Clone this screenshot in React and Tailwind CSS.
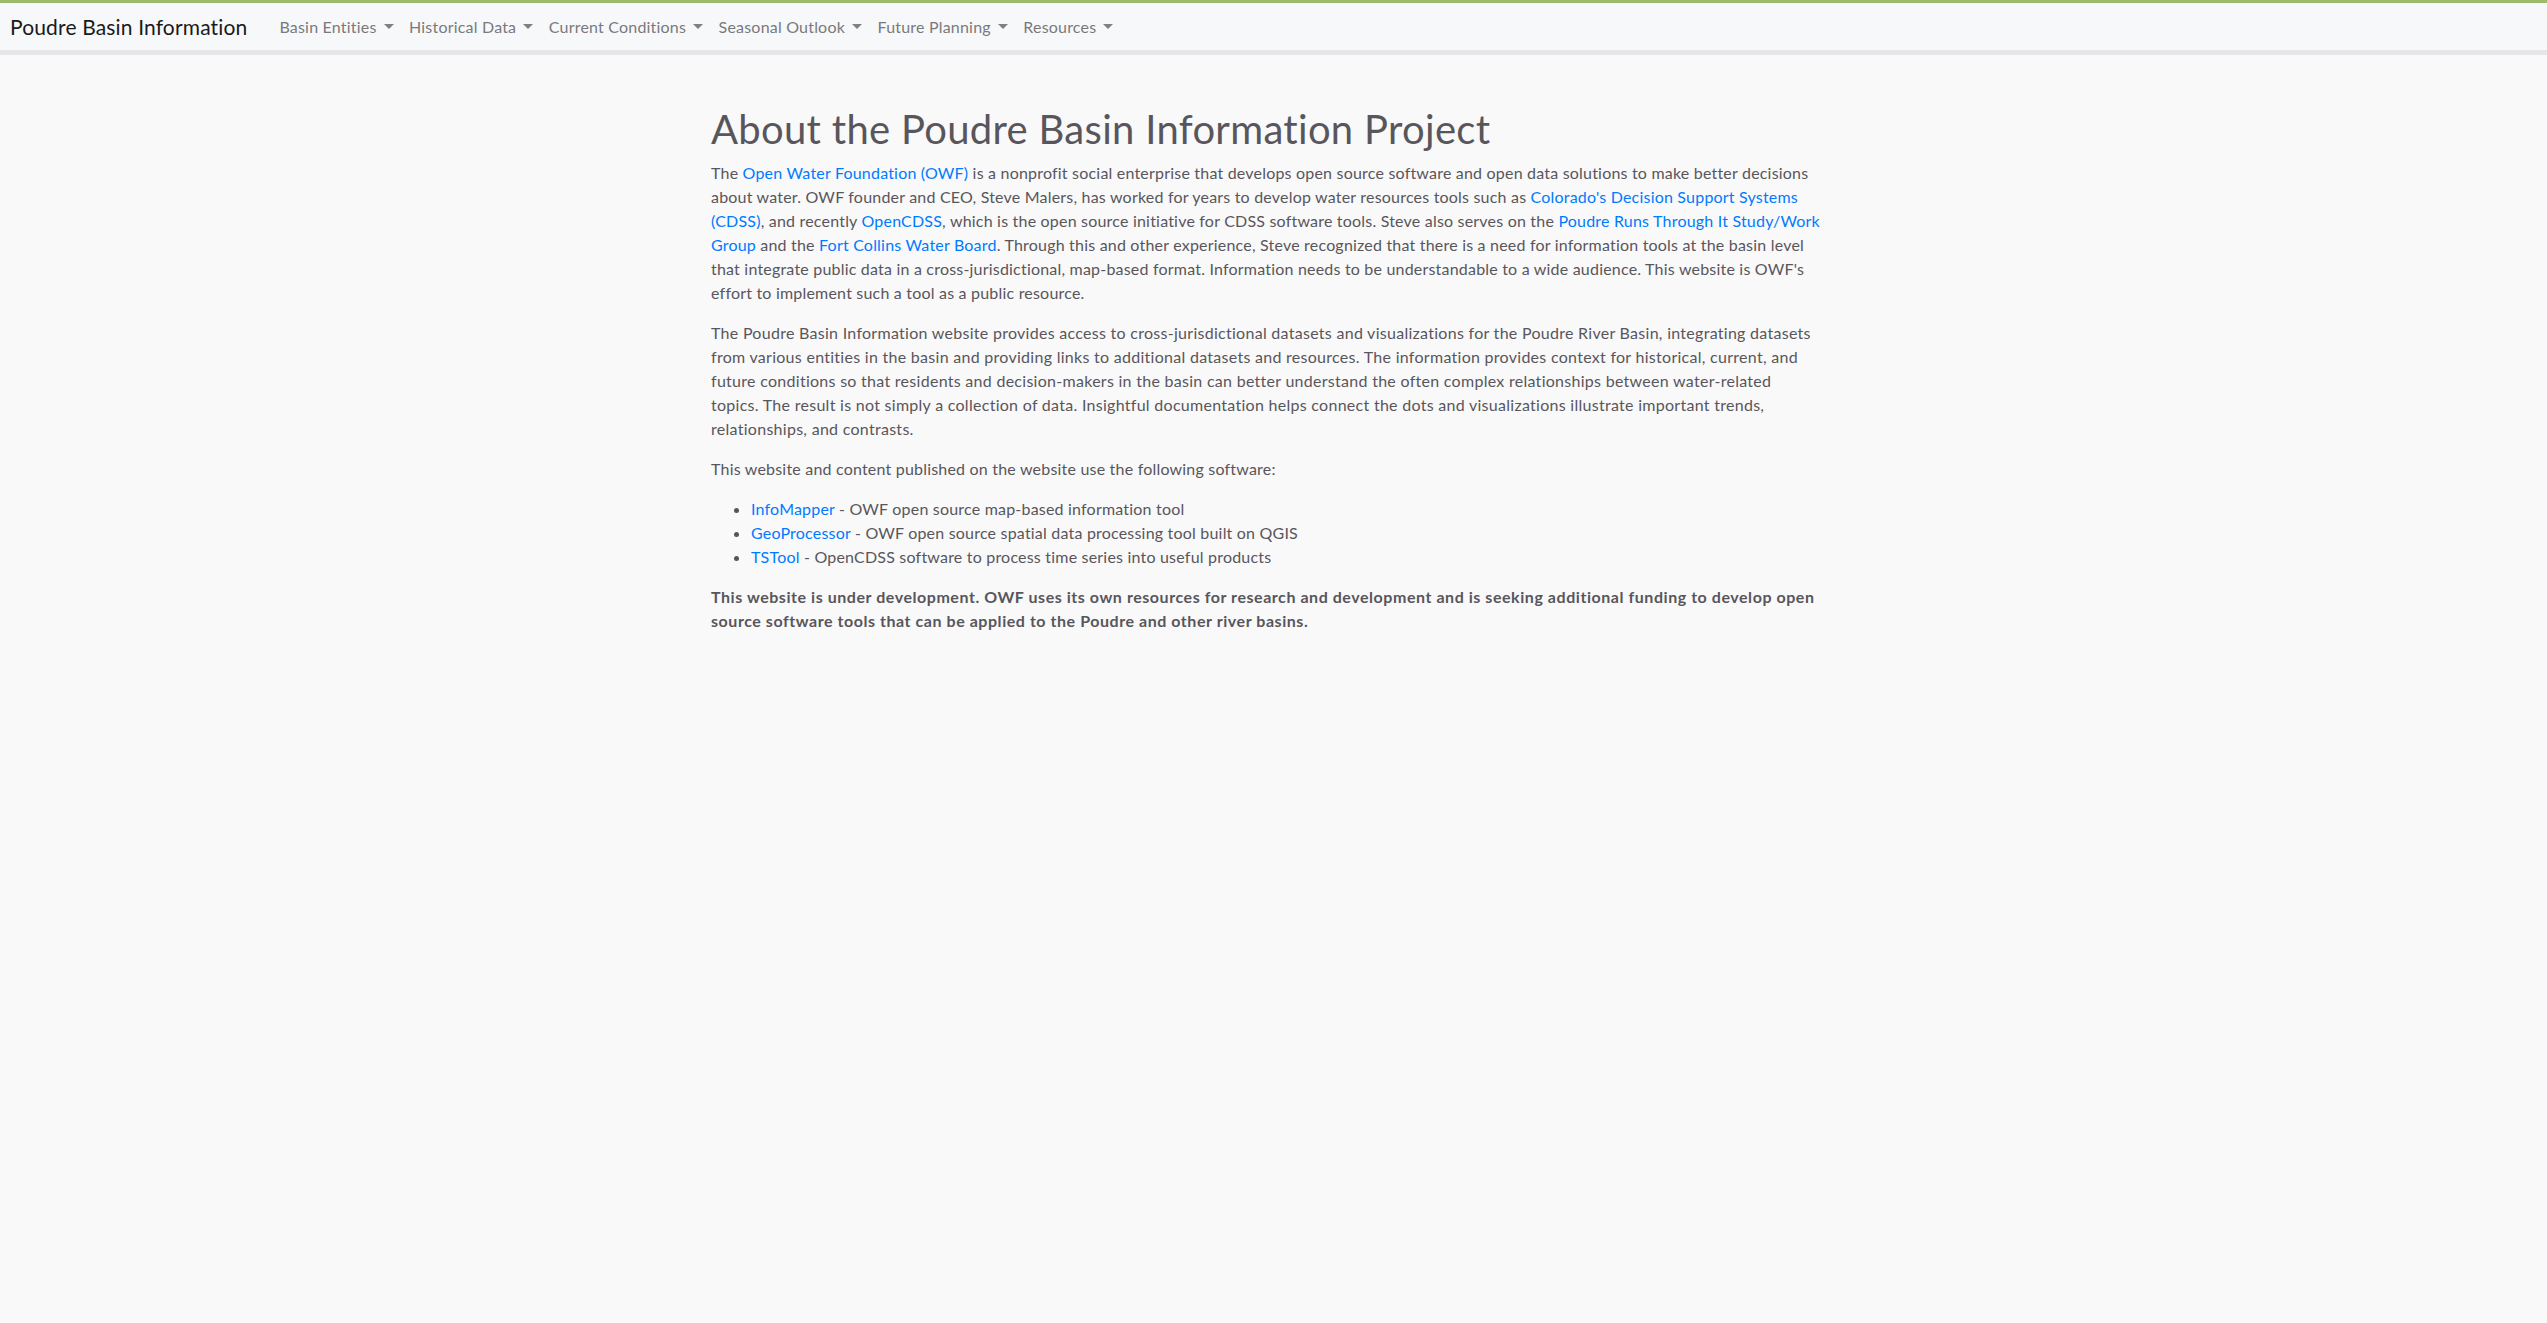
import React from "react";

const Caret = () => (
  <span className="ml-[7px] inline-block align-[3px] w-0 h-0 border-l-[5px] border-r-[5px] border-t-[5px] border-l-transparent border-r-transparent border-t-[#808080]" />
);

const A = ({ children }) => (
  <a href="#" className="text-[#007bff]">{children}</a>
);

export default function App() {
  const nav = ["Basin Entities", "Historical Data", "Current Conditions", "Seasonal Outlook", "Future Planning", "Resources"];
  return (
    <div className="min-h-[1323px] bg-[#f9f9f9] font-['Trebuchet_MS',Lato,sans-serif] text-[#58565c]">
      <nav className="border-t-[3px] border-[#9bbb6a] bg-[#f7f8fa] border-b-[5px] border-b-[#e6e6e9]">
        <div className="h-[47px] flex items-center px-[10px]">
          <span className="text-[21px] tracking-[0.15px] text-[#1a1a1a] mr-[32px]">Poudre Basin Information</span>
          <div className="flex items-center gap-[15.5px] text-[16px] tracking-[0.2px] text-[#7a7a7c]">
            {nav.map((n) => (
              <span key={n} className="flex items-center">
                {n}
                <Caret />
              </span>
            ))}
          </div>
        </div>
      </nav>
      <div className="pr-[15px]">
        <main className="w-[1110px] mx-auto pt-[50px] text-[16px] leading-[24px] tracking-[0.2px]">
          <h1 className="text-[40px] leading-[48px] mb-[8px] tracking-[0.3px] text-[#58565c]">About the Poudre Basin Information Project</h1>
          <p className="mb-[16px]">
            The <A>Open Water Foundation (OWF)</A> is a nonprofit social enterprise that develops open source software and open data solutions to make better decisions about water. OWF founder and CEO, Steve Malers, has worked for years to develop water resources tools such as <A>Colorado's Decision Support Systems (CDSS)</A>, and recently <A>OpenCDSS</A>, which is the open source initiative for CDSS software tools. Steve also serves on the <A>Poudre Runs Through It Study/Work Group</A> and the <A>Fort Collins Water Board</A>. Through this and other experience, Steve recognized that there is a need for information tools at the basin level that integrate public data in a cross-jurisdictional, map-based format. Information needs to be understandable to a wide audience. This website is OWF's effort to implement such a tool as a public resource.
          </p>
          <p className="mb-[16px] tracking-[0.28px]">
            The Poudre Basin Information website provides access to cross-jurisdictional datasets and visualizations for the Poudre River Basin, integrating datasets from various entities in the basin and providing links to additional datasets and resources. The information provides context for historical, current, and future conditions so that residents and decision-makers in the basin can better understand the often complex relationships between water-related topics. The result is not simply a collection of data. Insightful documentation helps connect the dots and visualizations illustrate important trends, relationships, and contrasts.
          </p>
          <p className="mb-[16px]">This website and content published on the website use the following software:</p>
          <ul className="list-disc pl-[40px] mb-[16px]">
            <li><A>InfoMapper</A> - OWF open source map-based information tool</li>
            <li><A>GeoProcessor</A> - OWF open source spatial data processing tool built on QGIS</li>
            <li><A>TSTool</A> - OpenCDSS software to process time series into useful products</li>
          </ul>
          <p className="font-bold tracking-[0.55px]">
            This website is under development. OWF uses its own resources for research and development and is seeking additional funding to develop open source software tools that can be applied to the Poudre and other river basins.
          </p>
        </main>
      </div>
    </div>
  );
}
